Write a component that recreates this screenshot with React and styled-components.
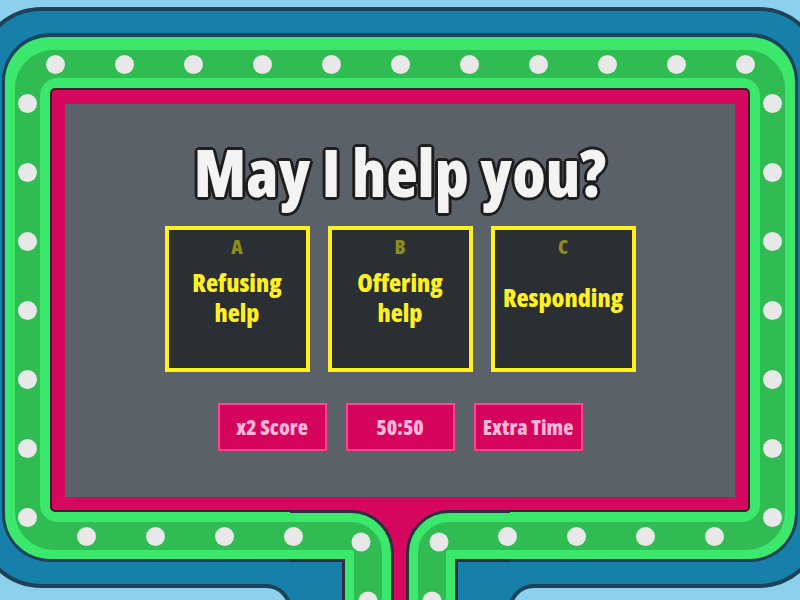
import React from 'react';
import styled, { createGlobalStyle } from 'styled-components';

const NAVY = '#1d4359';
const BLUE = '#1780aa';
const SKY = '#8dd0ee';
const LIME = '#3ce86b';
const GREEN = '#31bb53';
const MAGENTA = '#d6085e';
const EDGE = '#3a1e2d';
const BULB = '#e8e8e8';

const GlobalStyle = createGlobalStyle`
  html, body {
    margin: 0;
    padding: 0;
    background: ${SKY};
    overflow: hidden;
  }
  body {
    font-family: "Open Sans", "Roboto", sans-serif;
    font-stretch: 75%;
  }
`;

const Stage = styled.div`
  position: relative;
  width: 800px;
  height: 600px;
  padding-top: 7px;
  box-sizing: border-box;
  overflow: hidden;
`;

const BlueFrame = styled.div`
  display: flex;
  margin-left: -24px;
  width: 848px;
  height: 581px;
  box-sizing: border-box;
  border: 4px solid ${NAVY};
  border-radius: 66px;
  background: ${BLUE};
  padding: 22px;
`;

const GreenFrame = styled.div`
  flex: 1;
  display: flex;
  border: 3px solid ${NAVY};
  border-top-width: 4px;
  border-radius: 48px;
  background: ${LIME};
  padding: 13px 10px 9px;
`;

const BulbTrack = styled.div`
  flex: 1;
  display: flex;
  background: ${GREEN};
  border-radius: 38px;
  padding: 28px 25px;
`;

const InnerRim = styled.div`
  flex: 1;
  display: flex;
  background: ${LIME};
  border-radius: 18px;
  padding: 10px;
`;

const MagentaFrame = styled.div`
  flex: 1;
  display: flex;
  border: 2px solid ${EDGE};
  border-radius: 5px;
  background: ${MAGENTA};
  padding: 14px 13px 13px;
`;

const Board = styled.div`
  flex: 1;
  display: flex;
  flex-direction: column;
  align-items: center;
  background: #5a6168;
  padding-top: 35px;
  box-sizing: border-box;
`;

const outline = '#1e1e1e';
const Question = styled.h1`
  margin: 0;
  font-size: 65px;
  line-height: 66px;
  font-weight: 800;
  color: #f3f3f3;
  text-shadow:
    -2px -2px 0 ${outline}, 2px -2px 0 ${outline},
    -2px 2px 0 ${outline}, 2px 2px 0 ${outline},
    0 -3px 0 ${outline}, 0 3px 0 ${outline},
    -3px 0 0 ${outline}, 3px 0 0 ${outline};
`;

const Answers = styled.div`
  display: flex;
  gap: 18px;
  margin-top: 21px;
`;

const AnswerCard = styled.div`
  position: relative;
  width: 145px;
  height: 146px;
  box-sizing: border-box;
  border: 4px solid #fff01e;
  background: #2a2f33;
  display: flex;
  flex-direction: column;
  align-items: center;
  justify-content: center;
  text-align: center;
  padding: 0 6px 5px;
`;

const Letter = styled.span`
  position: absolute;
  top: 5px;
  left: 0;
  right: 0;
  font-size: 20px;
  line-height: 24px;
  font-weight: 800;
  color: #8e8c1d;
`;

const AnswerLine = styled.span`
  display: block;
  font-size: 25px;
  line-height: 30px;
  font-weight: 800;
  color: #fff022;
`;

const PowerUps = styled.div`
  display: flex;
  gap: 19px;
  margin-top: 31px;
`;

const PowerUp = styled.button`
  width: 109px;
  height: 48px;
  box-sizing: border-box;
  border: 2px solid #ff4790;
  background: #d5045d;
  color: #ffb6d7;
  font-family: inherit;
  font-stretch: 75%;
  font-size: 21px;
  font-weight: 800;
  padding: 0;
  display: flex;
  align-items: center;
  justify-content: center;
`;

const Bulb = styled.span`
  position: absolute;
  width: 19px;
  height: 19px;
  margin: -9.5px 0 0 -9.5px;
  border-radius: 50%;
  background: ${BULB};
`;

const Junction = styled.svg`
  position: absolute;
  left: 240px;
  top: 490px;
  width: 320px;
  height: 110px;
  display: block;
`;

const bulbs = [
  ...Array.from({ length: 11 }, (_, k) => [55 + 69 * k, 64]),
  ...Array.from({ length: 7 }, (_, k) => [27.5, 103 + 69 * k]),
  ...Array.from({ length: 7 }, (_, k) => [772.5, 103 + 69 * k]),
  ...[86, 155, 224, 293, 507, 576, 645, 714].map((x) => [x, 536]),
];

const answers = [
  { letter: 'A', text: ['Refusing', 'help'] },
  { letter: 'B', text: ['Offering', 'help'] },
  { letter: 'C', text: ['Responding'] },
];

const leftTube = 'M290 536 H351 A17 17 0 0 1 368 553 V620';
const rightTube = 'M510 536 H449 A17 17 0 0 0 432 553 V620';

function StemJunction() {
  return (
    <Junction viewBox="240 490 320 110">
      <rect x="270" y="562" width="260" height="40" fill={BLUE} />
      <rect x="150" y="586" width="140" height="100" rx="24" fill={SKY} stroke={NAVY} strokeWidth="4" />
      <rect x="510" y="586" width="140" height="100" rx="24" fill={SKY} stroke={NAVY} strokeWidth="4" />
      <rect x="352" y="500" width="96" height="100" fill={MAGENTA} />
      {[leftTube, rightTube].map((d) => (
        <g key={d} fill="none">
          <path d={d} stroke="#2b2f3f" strokeWidth="52" />
          <path d={d} stroke={LIME} strokeWidth="46" />
          <path d={d} stroke={GREEN} strokeWidth="28" />
        </g>
      ))}
      <circle cx="361" cy="542" r="9.5" fill={BULB} />
      <circle cx="439" cy="542" r="9.5" fill={BULB} />
      <circle cx="368" cy="601" r="9.5" fill={BULB} />
      <circle cx="432" cy="601" r="9.5" fill={BULB} />
    </Junction>
  );
}

export default function App() {
  return (
    <Stage>
      <GlobalStyle />
      <BlueFrame>
        <GreenFrame>
          <BulbTrack>
            <InnerRim>
              <MagentaFrame>
                <Board>
                  <Question>May I help you?</Question>
                  <Answers>
                    {answers.map((a) => (
                      <AnswerCard key={a.letter}>
                        <Letter>{a.letter}</Letter>
                        {a.text.map((line) => (
                          <AnswerLine key={line}>{line}</AnswerLine>
                        ))}
                      </AnswerCard>
                    ))}
                  </Answers>
                  <PowerUps>
                    <PowerUp>x2 Score</PowerUp>
                    <PowerUp>50:50</PowerUp>
                    <PowerUp>Extra Time</PowerUp>
                  </PowerUps>
                </Board>
              </MagentaFrame>
            </InnerRim>
          </BulbTrack>
        </GreenFrame>
      </BlueFrame>
      <StemJunction />
      {bulbs.map(([x, y]) => (
        <Bulb key={`${x}-${y}`} style={{ left: x, top: y }} />
      ))}
    </Stage>
  );
}
